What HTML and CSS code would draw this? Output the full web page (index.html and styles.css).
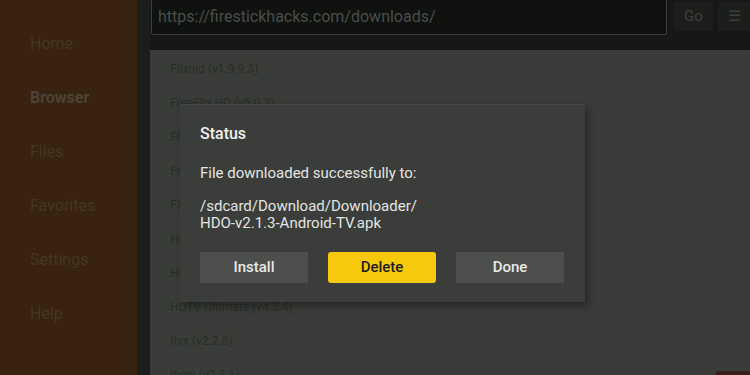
FILE: index.html
```html
<!DOCTYPE html>
<html>
  <head>
    <title>Downloader</title>
    <meta name="viewport" content="width=device-width,initial-scale=1">
    <link rel="stylesheet" href="styles.css">
  </head>
  <body>
    <div class="app">
      <nav class="sidebar">
        <div class="nav-item">Home</div>
        <div class="nav-item active">Browser</div>
        <div class="nav-item">Files</div>
        <div class="nav-item">Favorites</div>
        <div class="nav-item">Settings</div>
        <div class="nav-item">Help</div>
      </nav>
      <div class="divider"></div>
      <main class="main">
        <div class="topbar">
          <div class="url">https://firestickhacks.com/downloads/</div>
          <div class="btn-go">Go</div>
          <div class="btn-menu">&#9776;</div>
        </div>
        <ul class="list">
          <li>Flixoid (v1.9.9.3)</li>
          <li>FreeFlix HD (v5.0.2)</li>
          <li>FreeFlix TV (v2.1.0)</li>
          <li>Frostbite (v1.0.1)</li>
          <li>FX File Explorer (v8.0)</li>
          <li>HD Streamz (v3.5.8)</li>
          <li>HDO Box (v2.0.1)</li>
          <li>HDTV Ultimate (v4.3.4)</li>
          <li>Itvx (v2.2.8)</li>
          <li>Itvzo (v2.3.1)</li>
        </ul>
        <div class="corner"></div>
      </main>
    </div>

    <div class="dialog">
      <div class="dialog-title">Status</div>
      <div class="dialog-text">File downloaded successfully to:</div>
      <div class="dialog-path">/sdcard/Download/Downloader/<br>HDO-v2.1.3-Android-TV.apk</div>
      <div class="dialog-buttons">
        <div class="btn">Install</div>
        <div class="btn primary">Delete</div>
        <div class="btn">Done</div>
      </div>
    </div>
  </body>
</html>
```

FILE: styles.css
```css
html, body {
  margin: 0;
  padding: 0;
  width: 750px;
  height: 375px;
  overflow: hidden;
  font-family: Roboto, "Noto Sans", sans-serif;
  background-color: #393c38;
}
.app {
  display: flex;
  height: 375px;
}
.sidebar {
  width: 137px;
  flex: none;
  background-color: #382310;
  display: flex;
  flex-direction: column;
  gap: 35px;
  padding: 34px 0 0 30px;
  box-sizing: border-box;
}
.nav-item {
  font-size: 16px;
  line-height: 19px;
  color: #453627;
}
.nav-item.active {
  color: #4c4336;
  font-weight: bold;
}
.divider {
  width: 13px;
  flex: none;
  background-color: #1a1d1a;
}
.main {
  flex: 1;
  position: relative;
  background-color: #393c38;
  overflow: hidden;
}
.topbar {
  height: 50px;
  background-color: #161816;
  display: flex;
  align-items: flex-start;
  gap: 5px;
  padding-left: 1px;
}
.url {
  width: 516px;
  height: 36px;
  margin-top: -1px;
  box-sizing: border-box;
  border: 1px solid #3b3e3a;
  border-radius: 2px;
  background-color: #101210;
  color: #4a4d4a;
  font-size: 16px;
  line-height: 34px;
  padding-left: 6px;
}
.btn-go {
  margin-left: 2px;
  width: 39px;
  height: 29px;
  margin-top: 2px;
  background-color: #1c1e1c;
  color: #3e413e;
  font-size: 15px;
  line-height: 29px;
  text-align: center;
}
.btn-menu {
  flex: 1;
  height: 29px;
  margin-top: 2px;
  background-color: #1c1e1c;
  color: #3b3e3b;
  font-size: 15px;
  line-height: 29px;
  padding-left: 10px;
}
.list {
  list-style: none;
  margin: 0;
  padding: 11px 0 0 20px;
  display: flex;
  flex-direction: column;
  gap: 18px;
}
.list li {
  font-size: 12px;
  line-height: 16px;
  color: #2a2d29;
}
.corner {
  position: absolute;
  right: 0;
  bottom: 0;
  width: 34px;
  height: 4px;
  background-color: #3b1e1c;
  border-radius: 3px 0 0 0;
}
.dialog {
  position: absolute;
  left: 180px;
  top: 104px;
  width: 405px;
  height: 198px;
  box-sizing: border-box;
  padding: 19px 20px 0 20px;
  background-color: #3a3d39;
  border-top: 1px solid #434642;
  box-shadow: 3px 4px 8px rgba(0, 0, 0, 0.35);
  color: #e4e4e4;
}
.dialog-title {
  font-size: 16px;
  font-weight: 500;
  line-height: 19px;
  color: #f0f0f0;
}
.dialog-text {
  margin-top: 21px;
  font-size: 15px;
  line-height: 18px;
}
.dialog-path {
  margin-top: 16px;
  font-size: 15px;
  line-height: 17px;
}
.dialog-buttons {
  display: flex;
  gap: 20px;
  margin-top: 20px;
}
.btn {
  width: 108px;
  height: 31px;
  line-height: 31px;
  text-align: center;
  font-size: 15px;
  font-weight: 500;
  background-color: #4c4f4b;
  color: #e8e8e8;
  border-radius: 1px;
}
.btn.primary {
  background-color: #f7c90d;
  color: #1c1c1c;
  border-radius: 3px;
}
```
